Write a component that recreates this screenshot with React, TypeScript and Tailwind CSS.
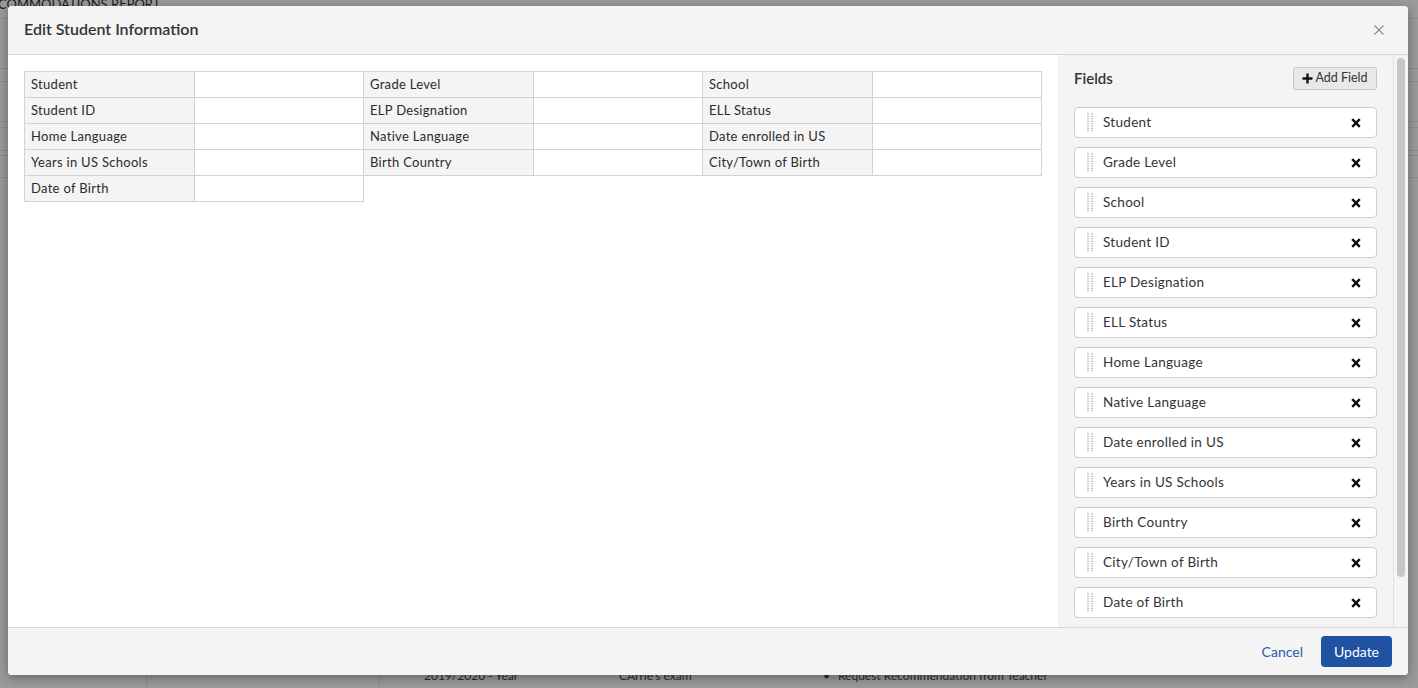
import React from "react";

const rows: [string, string, string][] = [
  ["Student", "Grade Level", "School"],
  ["Student ID", "ELP Designation", "ELL Status"],
  ["Home Language", "Native Language", "Date enrolled in US"],
  ["Years in US Schools", "Birth Country", "City/Town of Birth"],
];

const fields = [
  "Student",
  "Grade Level",
  "School",
  "Student ID",
  "ELP Designation",
  "ELL Status",
  "Home Language",
  "Native Language",
  "Date enrolled in US",
  "Years in US Schools",
  "Birth Country",
  "City/Town of Birth",
  "Date of Birth",
];

function Handle() {
  const dots = [];
  for (let i = 0; i < 8; i++) {
    dots.push(<circle key={"a" + i} cx="1" cy={1 + i * 2.4} r="0.7" />);
    dots.push(<circle key={"b" + i} cx="5" cy={1 + i * 2.4} r="0.7" />);
  }
  return (
    <svg width="6" height="19" viewBox="0 0 6 19" fill="#8c8c8c" className="shrink-0">
      {dots}
    </svg>
  );
}

function BoldX() {
  return (
    <svg width="10" height="10" viewBox="0 0 10 10" className="shrink-0">
      <path d="M1.2 1.2 L8.8 8.8 M8.8 1.2 L1.2 8.8" stroke="#111" strokeWidth="2.4" strokeLinecap="butt" />
    </svg>
  );
}

const font = { fontFamily: "Lato, 'Open Sans', 'Liberation Sans', sans-serif" };

export default function App() {
  return (
    <div className="relative w-[1418px] h-[688px] overflow-hidden bg-[#9b9b9b]" style={font}>
      {/* dimmed page behind */}
      <div className="flex flex-col h-full">
        <div className="h-[22px] border-b border-[#8d8d8d] text-[13px] leading-[14px] text-[#1c1c1c] -mt-[3px] -ml-[2px]">
          COMMODATIONS REPORT
        </div>
        <div className="h-[50px] border-b border-[#8d8d8d]" />
        <div className="h-[13px] border-b border-[#8d8d8d]" />
        <div className="h-[40px] border-b border-[#8d8d8d]" />
        <div className="h-[6px] border-b border-[#8d8d8d]" />
        <div className="h-[23px] border-b border-[#8d8d8d]" />
        <div className="h-[5px] border-b border-[#8d8d8d]" />
        <div className="h-[22px] border-b border-[#8d8d8d]" />
        <div className="flex-1" />
        <div className="h-[13px] flex text-[12px] leading-[13px] text-[#2a2a2a]">
          <div className="w-[147px] border-r border-[#8d8d8d]" />
          <div className="w-[233px] border-r border-[#8d8d8d]" />
          <div className="w-[239px] pl-[44px] -mt-[6px]">2019/2020 - Year</div>
          <div className="w-[204px] -mt-[6px]">CArrie's exam</div>
          <div className="-mt-[6px] flex gap-[8px]">
            <span>•</span>
            <span>Request Recommendation from Teacher</span>
          </div>
        </div>
      </div>

      {/* modal */}
      <div className="absolute left-[8px] top-[6px] w-[1400px] h-[669px] bg-white rounded-[4px] overflow-hidden flex flex-col shadow-[0_3px_12px_rgba(0,0,0,0.35)]">
        <div className="h-[49px] shrink-0 bg-[#f4f4f4] border-b border-[#d6d6d6] flex items-center justify-between pl-[16px] pr-[24px]">
          <div className="text-[16px] font-semibold text-[#333] -mt-[2px]">Edit Student Information</div>
          <svg width="10" height="10" viewBox="0 0 10 10">
            <path d="M0.5 0.5 L9.5 9.5 M9.5 0.5 L0.5 9.5" stroke="#8a8a8a" strokeWidth="1.1" />
          </svg>
        </div>

        <div className="flex-1 flex min-h-0">
          <div className="flex-1 px-[16px] pt-[16px]">
            <table className="w-[1018px] border-collapse table-fixed text-[13px] tracking-[0.3px] text-[#2b2b2b]">
              <tbody>
                {rows.map((r, i) => (
                  <tr key={i} className="h-[26px]">
                    {r.map((label, j) => (
                      <React.Fragment key={j}>
                        <td className="border border-[#d2d2d2] bg-[#f4f4f4] pl-[6px] leading-[22px] pb-[2px]">{label}</td>
                        <td className="border border-[#d2d2d2] bg-white" />
                      </React.Fragment>
                    ))}
                  </tr>
                ))}
                <tr className="h-[26px]">
                  <td className="border border-[#d2d2d2] bg-[#f4f4f4] pl-[6px] leading-[22px] pb-[2px]">Date of Birth</td>
                  <td className="border border-[#d2d2d2] bg-white" />
                  <td />
                  <td />
                  <td />
                  <td />
                </tr>
              </tbody>
            </table>
          </div>

          <div className="w-[350px] shrink-0 bg-[#f4f4f4] flex">
            <div className="flex-1 pl-[16px] pr-[16px] pt-[12px] overflow-hidden">
              <div className="flex items-center justify-between h-[23px]">
                <div className="text-[15px] font-semibold text-[#333]">Fields</div>
                <div className="w-[84px] h-[23px] rounded-[3px] border border-[#c8c8c8] bg-[#e8e8e8] flex items-center justify-center gap-[2px] text-[12.5px] text-[#333]">
                  <svg width="11" height="11" viewBox="0 0 11 11">
                    <path d="M5.5 0.5 V10.5 M0.5 5.5 H10.5" stroke="#111" strokeWidth="2.4" />
                  </svg>
                  <span>Add Field</span>
                </div>
              </div>
              <div className="flex flex-col gap-[9px] mt-[17px]">
                {fields.map((f) => (
                  <div
                    key={f}
                    className="h-[31px] shrink-0 bg-white border border-[#cfcfcf] rounded-[4px] flex items-center pl-[12px] pr-[15px]"
                  >
                    <Handle />
                    <span className="ml-[10px] flex-1 text-[13.5px] tracking-[0.3px] text-[#333]">{f}</span>
                    <BoldX />
                  </div>
                ))}
              </div>
            </div>
            <div className="w-[15px] shrink-0 border-l border-[#e2e2e2] pt-[3px] flex justify-center">
              <div className="w-[8px] h-[519px] rounded-full bg-[#c6c6c6]" />
            </div>
          </div>
        </div>

        <div className="h-[48px] shrink-0 bg-[#f4f4f4] border-t border-[#d6d6d6] flex items-center justify-end pr-[16px] gap-[18px]">
          <span className="text-[14px] text-[#2d5ca8] -mt-[1px]">Cancel</span>
          <div className="w-[71px] h-[31px] rounded-[4px] bg-[#1f52a0] text-white text-[14px] flex items-center justify-center">
            Update
          </div>
        </div>
      </div>
    </div>
  );
}
